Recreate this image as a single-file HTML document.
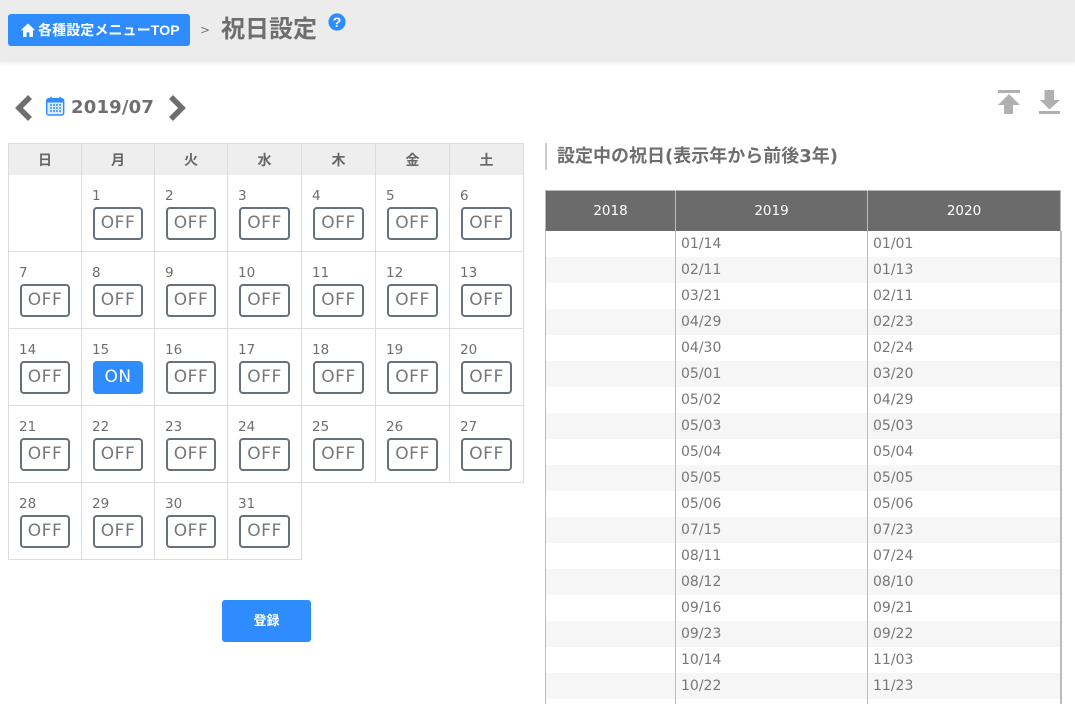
<!DOCTYPE html>
<html lang="ja"><head><meta charset="utf-8"><title>祝日設定</title>
<style>
html,body{margin:0;padding:0;background:#fff;width:1075px;height:704px;overflow:hidden}
#w{width:1075px;height:704px;overflow:hidden;position:relative;font-family:"DejaVu Sans","Noto Sans CJK JP",sans-serif;color:#6e6e6e}
.a{position:absolute}
#hd{left:0;top:0;width:1075px;height:62px;background:#ececec;box-shadow:0 1px 4px rgba(0,0,0,.08)}
#top{left:8px;top:14px;width:182px;height:32px;background:#2e8cff;border-radius:3px;color:#fff;font:bold 14px/32px "Liberation Sans","Noto Sans CJK JP",sans-serif;white-space:nowrap;letter-spacing:.1px}
#top span{position:absolute;left:30px;top:0}
#cal{left:8px;top:143px;border-collapse:collapse;table-layout:fixed;width:516px}
#cal th{height:31px;padding:0;background:#eee;border:1px solid #dcdcdc;border-bottom:0;font:bold 14px "Noto Sans CJK JP",sans-serif;color:#666}
#cal td{height:76px;padding:0;border:1px solid #dcdcdc;vertical-align:top;position:relative}
#cal tr:nth-child(2) td{border-top:0}
#cal td.e{border:0}
.n{position:absolute;left:10px;top:13px;font-size:13.5px;line-height:16px;color:#6e6e6e}
.o{position:absolute;left:11px;top:32px;width:46px;height:29px;border:2px solid #68707a;border-radius:4px;font-size:17px;line-height:28px;text-align:center;letter-spacing:.5px;color:#777;background:#fff}
#cal td:nth-child(n+4) .o{width:47px}
.o.on{background:#2e8cff;border-color:#2e8cff;color:#fff}
#hol{left:545px;top:190px;border-collapse:collapse;table-layout:fixed;width:515px}
#hol th{height:40px;padding:0;background:#6b6b6b;color:#fff;font-weight:normal;font-size:13.5px;border:1px solid #bbb;border-bottom:0}
#hol td{height:26px;padding:0 0 0 5px;font-size:14px;line-height:26px;color:#777;border-left:1px solid #bbb;border-right:1px solid #bbb}
#hol tr:nth-child(odd) td{background:#f6f6f6}
#hol td:last-child{border-right:2px solid #bbb}
</style></head><body><div id="w">
<div class="a" id="hd"></div>
<div class="a" id="top">
<svg class="a" style="left:12px;top:8px" width="16" height="16" viewBox="0 0 16 16"><path d="M8 1.500 0.800 8.200H3V15h3.600v-4.600h2.800V15H13V8.200h2.200z" fill="#fff"/></svg>
<span>各種設定メニューTOP</span></div>
<div class="a" style="left:200px;top:21px;font-size:12px;line-height:18px;color:#777">&gt;</div>
<div class="a" style="left:221px;top:11px;font:bold 24px/32px 'Noto Sans CJK JP',sans-serif;color:#6e6e6e;white-space:nowrap">祝日設定</div>
<svg class="a" style="left:328px;top:13px" width="18" height="18" viewBox="0 0 18 18"><circle cx="9" cy="9" r="8.600" fill="#2e8cff"/><text x="9" y="14" text-anchor="middle" font-family="Liberation Sans,sans-serif" font-weight="bold" font-size="14" fill="#fff">?</text></svg>

<svg class="a" style="left:13px;top:94px" width="20" height="28" viewBox="0 0 20 28"><path d="M17 3 6 14l11 11" fill="none" stroke="#6e6e6e" stroke-width="5.500"/></svg>
<svg class="a" style="left:46px;top:96px" width="19" height="20" viewBox="0 0 19 20"><rect x=".7" y="2.700" width="17" height="16.300" rx="2" fill="#dcebff" stroke="#2e8cff" stroke-width="1.400"/><rect x="1" y="3" width="17" height="3.500" fill="#2e8cff"/><path d="M5 .8v4M14 .8v4" stroke="#2e8cff" stroke-width="1.600"/><path d="M4 9h11M4 12h11M4 15h11" stroke="#2e8cff" stroke-width="1.400" stroke-dasharray="2 1"/></svg>
<div class="a" style="left:71px;top:95px;font-size:18px;font-weight:bold;line-height:26px;color:#6e6e6e;letter-spacing:.2px">2019/07</div>
<svg class="a" style="left:166px;top:94px" width="22" height="28" viewBox="0 0 22 28"><path d="M5 3l11 11L5 25" fill="none" stroke="#6e6e6e" stroke-width="5.500"/></svg>

<svg class="a" style="left:998px;top:90px" width="22" height="24" viewBox="0 0 22 24"><path d="M0 0h22v3H0zM11 4 0 15h6v9h9v-9h7z" fill="#b0b0b0"/></svg>
<svg class="a" style="left:1039px;top:90px" width="22" height="24" viewBox="0 0 22 24"><path d="M5.500 0h9.500v10h6L10.500 19.500 1 10h4.500zM0 21h21v3H0z" fill="#b0b0b0"/></svg>

<table class="a" id="cal"><colgroup><col style="width:73px"><col style="width:73px"><col style="width:73px"><col style="width:74px"><col style="width:74px"><col style="width:74px"><col style="width:74px"></colgroup>
<tr><th>日</th><th>月</th><th>火</th><th>水</th><th>木</th><th>金</th><th>土</th></tr>
<tr><td></td><td><div class="n">1</div><div class="o">OFF</div></td><td><div class="n">2</div><div class="o">OFF</div></td><td><div class="n">3</div><div class="o">OFF</div></td><td><div class="n">4</div><div class="o">OFF</div></td><td><div class="n">5</div><div class="o">OFF</div></td><td><div class="n">6</div><div class="o">OFF</div></td></tr>
<tr><td><div class="n">7</div><div class="o">OFF</div></td><td><div class="n">8</div><div class="o">OFF</div></td><td><div class="n">9</div><div class="o">OFF</div></td><td><div class="n">10</div><div class="o">OFF</div></td><td><div class="n">11</div><div class="o">OFF</div></td><td><div class="n">12</div><div class="o">OFF</div></td><td><div class="n">13</div><div class="o">OFF</div></td></tr>
<tr><td><div class="n">14</div><div class="o">OFF</div></td><td><div class="n">15</div><div class="o on">ON</div></td><td><div class="n">16</div><div class="o">OFF</div></td><td><div class="n">17</div><div class="o">OFF</div></td><td><div class="n">18</div><div class="o">OFF</div></td><td><div class="n">19</div><div class="o">OFF</div></td><td><div class="n">20</div><div class="o">OFF</div></td></tr>
<tr><td><div class="n">21</div><div class="o">OFF</div></td><td><div class="n">22</div><div class="o">OFF</div></td><td><div class="n">23</div><div class="o">OFF</div></td><td><div class="n">24</div><div class="o">OFF</div></td><td><div class="n">25</div><div class="o">OFF</div></td><td><div class="n">26</div><div class="o">OFF</div></td><td><div class="n">27</div><div class="o">OFF</div></td></tr>
<tr><td><div class="n">28</div><div class="o">OFF</div></td><td><div class="n">29</div><div class="o">OFF</div></td><td><div class="n">30</div><div class="o">OFF</div></td><td><div class="n">31</div><div class="o">OFF</div></td><td class="e"></td><td class="e"></td><td class="e"></td></tr>
</table>

<div class="a" style="left:222px;top:600px;width:89px;height:42px;background:#2e8cff;border-radius:3px;color:#fff;font:bold 13px/40px 'Noto Sans CJK JP',sans-serif;text-align:center">登録</div>

<div class="a" style="left:545px;top:143px;width:2px;height:27px;background:#ccc"></div>
<div class="a" style="left:557px;top:144px;font:bold 18px/25px 'DejaVu Sans','Noto Sans CJK JP',sans-serif;color:#6e6e6e;white-space:nowrap">設定中の祝日(表示年から前後3年)</div>

<table class="a" id="hol"><colgroup><col style="width:130px"><col style="width:192px"><col style="width:193px"></colgroup>
<tr><th>2018</th><th>2019</th><th>2020</th></tr>
<tr><td></td><td>01/14</td><td>01/01</td></tr>
<tr><td></td><td>02/11</td><td>01/13</td></tr>
<tr><td></td><td>03/21</td><td>02/11</td></tr>
<tr><td></td><td>04/29</td><td>02/23</td></tr>
<tr><td></td><td>04/30</td><td>02/24</td></tr>
<tr><td></td><td>05/01</td><td>03/20</td></tr>
<tr><td></td><td>05/02</td><td>04/29</td></tr>
<tr><td></td><td>05/03</td><td>05/03</td></tr>
<tr><td></td><td>05/04</td><td>05/04</td></tr>
<tr><td></td><td>05/05</td><td>05/05</td></tr>
<tr><td></td><td>05/06</td><td>05/06</td></tr>
<tr><td></td><td>07/15</td><td>07/23</td></tr>
<tr><td></td><td>08/11</td><td>07/24</td></tr>
<tr><td></td><td>08/12</td><td>08/10</td></tr>
<tr><td></td><td>09/16</td><td>09/21</td></tr>
<tr><td></td><td>09/23</td><td>09/22</td></tr>
<tr><td></td><td>10/14</td><td>11/03</td></tr>
<tr><td></td><td>10/22</td><td>11/23</td></tr>
<tr><td></td><td></td><td></td></tr>
</table>
</div></body></html>
